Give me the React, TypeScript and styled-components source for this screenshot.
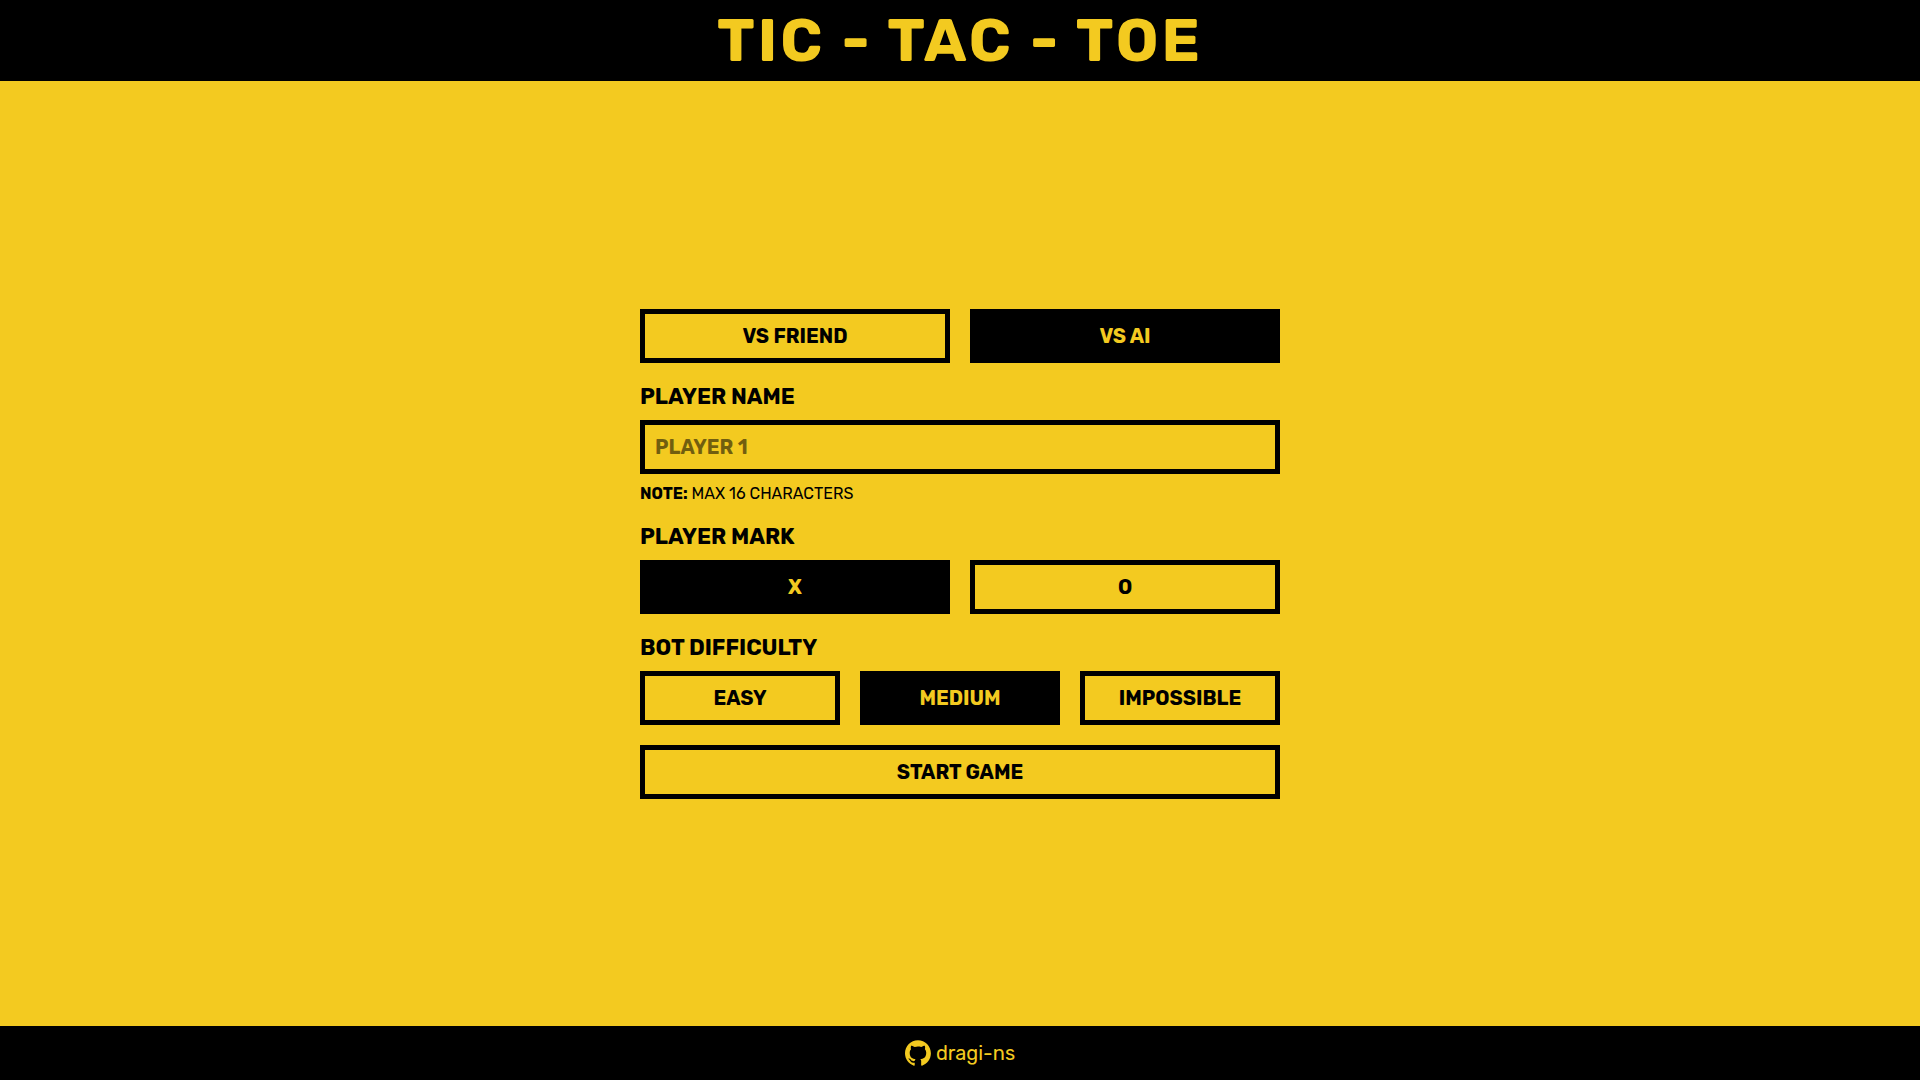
import React, { useState } from "react";
import styled, { createGlobalStyle, css } from "styled-components";

const yellow = "#f3ca20";
const black = "#000";

const GlobalStyle = createGlobalStyle`
  *, *::before, *::after { box-sizing: border-box; margin: 0; padding: 0; }
  body {
    background: ${yellow};
    color: ${black};
    font-family: Rubik, Inter, "Liberation Sans", sans-serif;
    font-size: 20px;
    line-height: 24px;
  }
`;

const Page = styled.div`
  min-height: 100vh;
  display: flex;
  flex-direction: column;
`;

const Header = styled.header`
  background: ${black};
  color: ${yellow};
  padding: 5px;
  text-align: center;
`;

const Title = styled.h1`
  font-size: 60px;
  line-height: 71px;
  font-weight: 700;
  letter-spacing: 3px;
`;

const Main = styled.main`
  flex: 1;
  display: flex;
  align-items: center;
  justify-content: center;
  padding: 20px;
`;

const Form = styled.form`
  width: 100%;
  max-width: 640px;
  display: flex;
  flex-direction: column;
  gap: 20px;
`;

const Field = styled.div`
  display: flex;
  flex-direction: column;
  gap: 10px;
`;

const labelText = css`
  font-size: 22px;
  line-height: 27px;
  font-weight: 700;
`;

const Label = styled.label`
  ${labelText}
`;

const GroupLabel = styled.h2`
  ${labelText}
`;

const Options = styled.div`
  display: grid;
  grid-auto-flow: column;
  grid-auto-columns: minmax(0, 1fr);
  gap: 20px;
`;

const box = css`
  width: 100%;
  padding: 10px;
  border: 5px solid ${black};
  border-radius: 0;
  font: inherit;
  font-weight: 700;
`;

const Button = styled.button<{ $active?: boolean }>`
  ${box}
  background: ${(p) => (p.$active ? black : "transparent")};
  color: ${(p) => (p.$active ? yellow : black)};
  cursor: pointer;
`;

const Input = styled.input`
  ${box}
  height: 54px;
  background: transparent;
  color: ${black};
  &::placeholder {
    color: rgba(0, 0, 0, 0.54);
    opacity: 1;
  }
`;

const Note = styled.p`
  font-size: 16px;
  line-height: 19px;
`;

const Footer = styled.footer`
  background: ${black};
  padding: 14px;
  display: flex;
  justify-content: center;
`;

const Profile = styled.a`
  display: flex;
  align-items: center;
  gap: 5px;
  color: ${yellow};
  text-decoration: none;
`;

function GithubMark() {
  return (
    <svg width="26" height="26" viewBox="0 0 98 96" fill="currentColor" aria-hidden="true">
      <path
        fillRule="evenodd"
        clipRule="evenodd"
        d="M48.854 0C21.839 0 0 22 0 49.217c0 21.756 13.993 40.172 33.405 46.69 2.427.49 3.316-1.059 3.316-2.362 0-1.141-.08-5.052-.08-9.127-13.59 2.934-16.42-5.867-16.42-5.867-2.184-5.704-5.42-7.17-5.42-7.17-4.448-3.015.324-3.015.324-3.015 4.934.326 7.523 5.052 7.523 5.052 4.367 7.496 11.404 5.378 14.235 4.074.404-3.178 1.699-5.378 3.074-6.6-10.839-1.141-22.243-5.378-22.243-24.283 0-5.378 1.94-9.778 5.014-13.2-.485-1.222-2.184-6.275.486-13.038 0 0 4.125-1.304 13.426 5.052a46.97 46.97 0 0 1 12.214-1.63c4.125 0 8.33.571 12.213 1.63 9.302-6.356 13.427-5.052 13.427-5.052 2.67 6.763.97 11.816.485 13.038 3.155 3.422 5.015 7.822 5.015 13.2 0 18.905-11.404 23.06-22.324 24.283 1.78 1.548 3.316 4.481 3.316 9.126 0 6.6-.08 11.897-.08 13.526 0 1.304.89 2.853 3.316 2.364 19.412-6.52 33.405-24.935 33.405-46.691C97.707 22 75.788 0 48.854 0z"
      />
    </svg>
  );
}

type ChoiceProps = {
  label: string;
  options: string[];
  value: string;
  onChange: (value: string) => void;
};

function Choice({ label, options, value, onChange }: ChoiceProps) {
  return (
    <Options role="group" aria-label={label}>
      {options.map((option) => (
        <Button
          key={option}
          type="button"
          $active={option === value}
          aria-pressed={option === value}
          onClick={() => onChange(option)}
        >
          {option}
        </Button>
      ))}
    </Options>
  );
}

export default function App() {
  const [mode, setMode] = useState("VS AI");
  const [mark, setMark] = useState("X");
  const [level, setLevel] = useState("MEDIUM");

  return (
    <Page>
      <GlobalStyle />
      <Header>
        <Title>TIC - TAC - TOE</Title>
      </Header>
      <Main>
        <Form onSubmit={(e) => e.preventDefault()}>
          <Choice label="GAME MODE" options={["VS FRIEND", "VS AI"]} value={mode} onChange={setMode} />
          <Field>
            <Label htmlFor="player-name">PLAYER NAME</Label>
            <Input id="player-name" type="text" maxLength={16} placeholder="PLAYER 1" autoComplete="off" />
            <Note>
              <strong>NOTE:</strong> MAX 16 CHARACTERS
            </Note>
          </Field>
          <Field>
            <GroupLabel>PLAYER MARK</GroupLabel>
            <Choice label="PLAYER MARK" options={["X", "O"]} value={mark} onChange={setMark} />
          </Field>
          <Field>
            <GroupLabel>BOT DIFFICULTY</GroupLabel>
            <Choice
              label="BOT DIFFICULTY"
              options={["EASY", "MEDIUM", "IMPOSSIBLE"]}
              value={level}
              onChange={setLevel}
            />
          </Field>
          <Button type="submit">START GAME</Button>
        </Form>
      </Main>
      <Footer>
        <Profile href="https://github.com/dragi-ns">
          <GithubMark />
          dragi-ns
        </Profile>
      </Footer>
    </Page>
  );
}
